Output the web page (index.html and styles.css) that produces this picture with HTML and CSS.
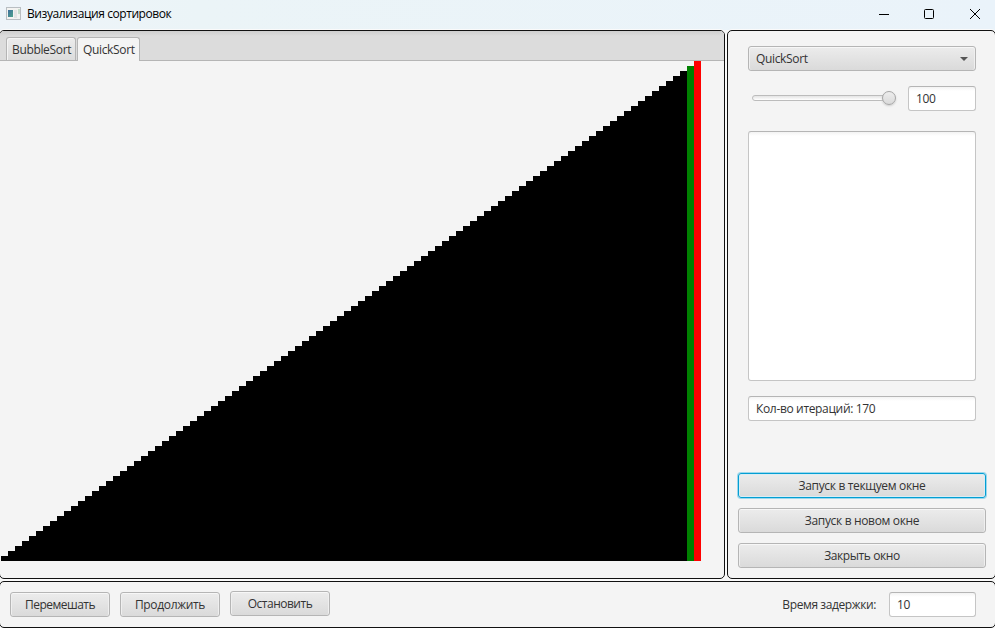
FILE: index.html
```
<!DOCTYPE html>
<html lang="ru">
<head>
<meta charset="utf-8">
<title>Визуализация сортировок</title>
<link rel="stylesheet" href="styles.css">
</head>
<body>
<div class="window">
  <header class="titlebar">
    <svg class="app-icon" width="16" height="14" viewBox="0 0 16 14">
      <defs><linearGradient id="g" x1="0" y1="0" x2="1" y2="1"><stop offset="0" stop-color="#3f6f9e"/><stop offset="1" stop-color="#4fa38a"/></linearGradient></defs>
      <rect x=".5" y=".5" width="14" height="12" fill="#f3f3f1" stroke="#b9bec2"/>
      <rect x="2" y="3" width="5" height="7" fill="url(#g)"/>
      <rect x="8" y="3" width="3" height="8" fill="#e4e4e4"/>
      <rect x="12" y="2" width="2" height="5" fill="#c5dccb"/>
    </svg>
    <h1 class="title">Визуализация сортировок</h1>
    <svg class="controls" width="104" height="12" viewBox="0 0 104 12" fill="none" stroke="#000">
      <path d="M1 6.500h10"/>
      <rect x="46.500" y="1.500" width="9" height="9" rx="1"/>
      <path d="M92 1l10 10M102 1L92 11"/>
    </svg>
  </header>
  <main class="workspace">
    <section class="panel chart-panel">
      <nav class="tabs">
        <div class="tab tab-bubble">BubbleSort</div>
        <div class="tab tab-quick active">QuickSort</div>
      </nav>
      <div class="bars" id="bars"></div>
    </section>
    <aside class="panel side">
      <div class="button combo"><span>QuickSort</span><i class="arrow"></i></div>
      <div class="slider-row">
        <div class="slider"><div class="track"></div><div class="thumb"></div></div>
        <div class="field size">100</div>
      </div>
      <div class="field area"></div>
      <div class="field iterations">Кол-во итераций: 170</div>
      <div class="actions">
        <button class="button focused">Запуск в текщуем окне</button>
        <button class="button">Запуск в новом окне</button>
        <button class="button close">Закрыть окно</button>
      </div>
    </aside>
  </main>
  <footer class="panel toolbar">
    <button class="button shuffle">Перемешать</button>
    <button class="button continue">Продолжить</button>
    <button class="button stop">Остановить</button>
    <span class="delay-label">Время задержки:</span>
    <div class="field delay">10</div>
  </footer>
</div>
<script src="app.js"></script>
</body>
</html>
```
FILE: styles.css
```
* { box-sizing: border-box; }
body {
  margin: 0;
  width: 995px;
  height: 628px;
  overflow: hidden;
  background: #f4f4f4;
  color: #333;
  font: 12px/16px "Open Sans", "Noto Sans", sans-serif;
  letter-spacing: -.34px;
}
.window { display: flex; flex-direction: column; width: 997px; height: 628px; margin-left: -1px; }
.titlebar {
  display: flex;
  align-items: center;
  flex: none;
  height: 30px;
  padding: 0 14px 3px 7px;
  background: linear-gradient(90deg, #eef4f9, #ebf4f7 20%, #eaf3fa);
  color: #000;
}
.app-icon { margin-right: 5px; }
.title { margin: 0; font-size: 12px; font-weight: 400; letter-spacing: -.43px; }
.controls { margin-left: auto; }
.workspace { display: flex; gap: 2px; flex: none; height: 549px; }
.panel { border: 1px solid #111; border-radius: 5px; background: #f4f4f4; box-shadow: 0 0 0 1px #fafafa; }
.chart-panel { width: 726px; overflow: hidden; }
.tabs {
  display: flex;
  align-items: flex-end;
  gap: 1px;
  height: 30px;
  padding-left: 6px;
  border-bottom: 1px solid #b5b5b5;
  background: linear-gradient(#cecece, #dcdcdc 5px);
}
.tab {
  height: 23px;
  border: 1px solid #b5b5b5;
  border-bottom: 0;
  border-radius: 3px 3px 0 0;
  background: linear-gradient(#ececec, #dcdcdc);
  box-shadow: inset 1px 1px #f5f5f5;
  padding-left: 5px;
  line-height: 23px;
  white-space: nowrap;
}
.tab-bubble { width: 70px; }
.tab-quick { width: 63px; }
.tab.active { height: 24px; margin-bottom: -1px; background: #f4f4f4; }
.bars { display: flex; align-items: flex-end; height: 500px; padding-left: 1px; }
.bar { width: 7px; background: #000; }
.bar.compare { background: #008000; }
.bar.pivot { background: #f00; }
.side { display: flex; flex-direction: column; width: 269px; padding: 15px 0 0 10px; }
.button {
  display: flex;
  align-items: center;
  justify-content: center;
  height: 25px;
  padding: 0;
  border: 1px solid #b5b5b5;
  border-radius: 3px;
  background: linear-gradient(#ececec, #dadada);
  box-shadow: inset 0 1px #f7f7f7, inset 1px 0 #efefef, inset -1px 0 #efefef;
  color: #333;
  font: inherit;
  letter-spacing: inherit;
  white-space: nowrap;
}
.button.focused { border-color: #039ed3; box-shadow: 0 0 0 1px #9bd7ec, inset 0 0 0 1px #d9edf4; }
.button.close { letter-spacing: -.42px; }
.combo { width: 228px; margin-left: 10px; justify-content: space-between; padding: 0 7px; }
.arrow { border: 4px solid transparent; border-top-color: #555; border-bottom: 0; }
.slider-row { display: flex; justify-content: space-between; width: 228px; margin: 15px 0 0 10px; }
.slider { position: relative; width: 148px; height: 25px; padding: 9px 0 0 4px; }
.track { width: 142px; height: 6px; border: 1px solid #bcbcbc; border-radius: 3px; background: linear-gradient(#e4e4e4, #fff); }
.thumb {
  position: absolute;
  left: 134px;
  top: 5px;
  width: 14px;
  height: 14px;
  border: 1px solid #a5a5a5;
  border-radius: 50%;
  background: linear-gradient(#ededed, #dadada);
  box-shadow: 0 1px 2px #ccc;
}
.field {
  height: 25px;
  padding: 0 7px;
  border: 1px solid #c5c5c5;
  border-top-color: #b5b5b5;
  border-radius: 3px;
  background: linear-gradient(#f3f3f3, #fff 4px);
  line-height: 24px;
  white-space: nowrap;
}
.size { width: 68px; }
.area { width: 228px; height: 250px; margin: 20px 0 0 10px; }
.iterations { width: 228px; margin: 15px 0 0 10px; }
.actions { display: flex; flex-direction: column; gap: 10px; width: 248px; margin-top: 52px; }
.toolbar { display: flex; align-items: center; flex: none; gap: 10px; height: 47px; margin-top: 2px; padding: 0 19px 0 10px; }
.toolbar .button { width: 100px; }
.shuffle { letter-spacing: -.5px; }
.stop { margin-top: -2px; letter-spacing: -.5px; }
.delay-label { margin-left: auto; letter-spacing: -.4px; }
.delay { width: 87px; margin-left: 3px; }
```
FILE: app.js
```
const bars = document.getElementById('bars');
for (let value = 1; value <= 100; value++) {
  const bar = document.createElement('div');
  bar.className = 'bar' + (value === 99 ? ' compare' : value === 100 ? ' pivot' : '');
  bar.style.height = value * 5 + 'px';
  bars.appendChild(bar);
}
```
